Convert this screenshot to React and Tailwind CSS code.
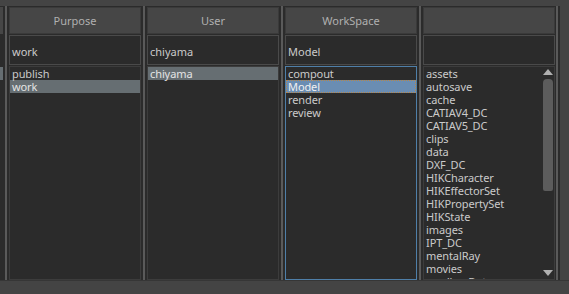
import React from 'react'

const COLUMNS = [
  { title: 'Purpose', value: 'work', items: ['publish', 'work'], selected: 1 },
  { title: 'User', value: 'chiyama', items: ['chiyama'], selected: 0 },
  { title: 'WorkSpace', value: 'Model', items: ['compout', 'Model', 'render', 'review'], selected: 1, focused: true },
  {
    title: '',
    value: '',
    items: [
      'assets', 'autosave', 'cache', 'CATIAV4_DC', 'CATIAV5_DC', 'clips', 'data', 'DXF_DC',
      'HIKCharacter', 'HIKEffectorSet', 'HIKPropertySet', 'HIKState', 'images', 'IPT_DC',
      'mentalRay', 'movies', 'mudboxData',
    ],
    selected: -1,
    scroll: true,
  },
]

function Separator() {
  return (
    <div className="w-[6px] flex justify-center shrink-0">
      <div className="w-[2px] bg-[#5a5a5a]" />
    </div>
  )
}

function Scrollbar() {
  return (
    <div className="absolute right-[1px] top-0 bottom-0 w-[11px] flex flex-col items-center">
      <div className="mt-[2px] w-0 h-0 border-l-[5px] border-r-[5px] border-b-[6px] border-l-transparent border-r-transparent border-b-[#b0b0b0]" />
      <div className="mt-[4px] w-[10px] h-[112px] rounded-t-[4px] rounded-b-[2px] bg-[#5c5c5c]" />
      <div className="flex-1" />
      <div className="mb-[3px] w-0 h-0 border-l-[5px] border-r-[5px] border-t-[6px] border-l-transparent border-r-transparent border-t-[#b0b0b0]" />
    </div>
  )
}

function Column({ col }) {
  return (
    <div className="w-[132px] shrink-0 flex flex-col pt-[1px] gap-[1px]">
      <div className="h-[27px] shrink-0 bg-[#464646] border border-[#3a3a3a] flex items-center justify-center pt-[1px] text-[#b0b0b0]">
        {col.title}
      </div>
      <div className="h-[30px] shrink-0 bg-[#2b2b2b] border border-[#4a4a4a] flex items-center pl-[2px] pt-[4px] text-[#cacaca]">
        {col.value}
      </div>
      <div
        className={`relative flex-1 overflow-hidden bg-[#2b2b2b] border ${
          col.focused ? 'border-[#4f7fa8]' : 'border-[#3c3c3c]'
        }`}
      >
        {col.items.map((it, i) => {
          const sel = i === col.selected
          let cls = 'text-[#cacaca]'
          if (sel && col.focused) cls = 'bg-[#6a8db3] text-[#f0f0f0] outline outline-1 outline-dotted outline-[#b7874a] -outline-offset-1'
          else if (sel) cls = 'bg-[#666e72] text-[#e4e4e4]'
          return (
            <div key={it} className={`h-[13px] leading-[13px] pl-[2px] whitespace-nowrap tracking-[-0.1px] ${cls}`}>
              {it}
            </div>
          )
        })}
        {col.scroll && <Scrollbar />}
      </div>
    </div>
  )
}

export default function App() {
  return (
    <div className="w-[569px] h-[294px] bg-[#444444] flex flex-col overflow-hidden text-[11px] font-['Noto_Sans',sans-serif]">
      <div className="h-[6px] shrink-0" />
      <div className="h-[274px] shrink-0 flex bg-[#2b2b2b]">
        <div className="w-[3px] shrink-0 flex flex-col pt-[1px] gap-[1px]">
          <div className="h-[27px] bg-[#464646]" />
          <div className="h-[30px] bg-[#2b2b2b]" />
          <div className="flex-1 pt-[1px]">
            <div className="h-[13px] bg-[#666e72]" />
          </div>
        </div>
        {COLUMNS.map((c, i) => (
          <React.Fragment key={i}>
            <Separator />
            <Column col={c} />
          </React.Fragment>
        ))}
        <div className="w-[1px] shrink-0" />
        <div className="w-[2px] shrink-0 bg-[#5a5a5a]" />
        <div className="w-[2px] shrink-0" />
        <div className="flex-1 bg-[#444444]" />
      </div>
      <div className="h-[1px] shrink-0 bg-[#363636]" />
      <div className="flex-1" />
    </div>
  )
}
